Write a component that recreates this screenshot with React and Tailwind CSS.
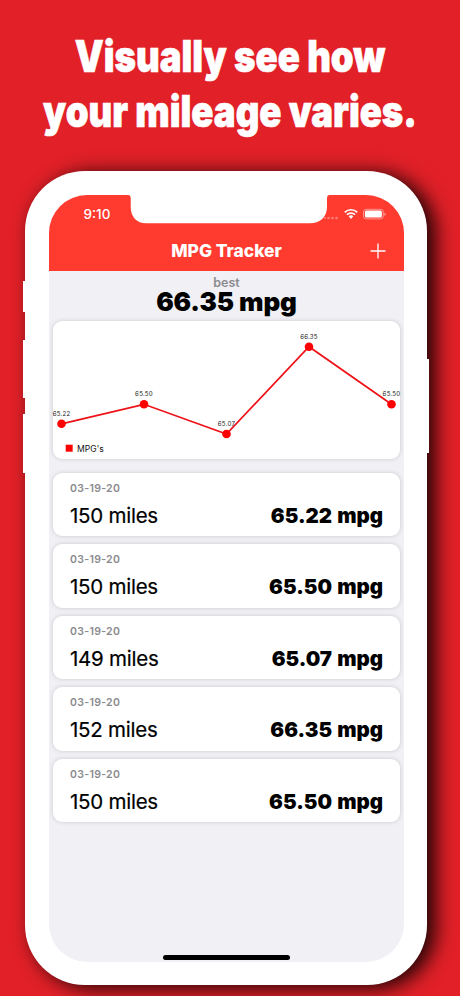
import React from "react";

const entries = [
  { date: "03-19-20", miles: "150 miles", mpg: "65.22 mpg" },
  { date: "03-19-20", miles: "150 miles", mpg: "65.50 mpg" },
  { date: "03-19-20", miles: "149 miles", mpg: "65.07 mpg" },
  { date: "03-19-20", miles: "152 miles", mpg: "66.35 mpg" },
  { date: "03-19-20", miles: "150 miles", mpg: "65.50 mpg" },
];

const points = [
  { x: 8.5, y: 102.8, label: "65.22" },
  { x: 91, y: 83.3, label: "65.50" },
  { x: 173.5, y: 113, label: "65.07" },
  { x: 256, y: 25.7, label: "66.35" },
  { x: 338.5, y: 83.3, label: "65.50" },
];

function Headline() {
  return (
    <h1 className="h-[171px] pt-[29px] text-center text-[44px] leading-[55px] font-black text-white whitespace-nowrap [-webkit-text-stroke:0.7px_white]">
      <span className="block origin-center scale-x-[0.83]">Visually see how</span>
      <span className="block origin-center scale-x-[0.83]">your mileage varies.</span>
    </h1>
  );
}

function StatusBar() {
  return (
    <div className="flex h-[38px] items-start text-white">
      <span className="w-[76px] pt-[10px] pl-[34.5px] text-[13.5px] leading-[18px] font-medium">9:10</span>
      <svg className="shrink-0" width="204" height="29" viewBox="0 0 204 29" fill="#fff">
        <path d="M3 0H204Q202 0.300 202 3V12C202 22 195 28.300 185 28.300H21C12 28.300 5.700 22 5.700 12V3Q5.700 0 3 0Z" />
      </svg>
      <svg className="-ml-[6px] mt-[12px] shrink-0" width="66" height="16" viewBox="0 0 66 16" fill="#fff">
        <g opacity="0.35">
          <circle cx="5.500" cy="11" r="1.300" />
          <circle cx="9.500" cy="11" r="1.300" />
          <circle cx="13.500" cy="11" r="1.300" />
          <circle cx="2" cy="11" r="1.100" />
        </g>
        <path d="M28 8.200Q29.500 8.200 30.300 9.200L28 11.900L25.700 9.200Q26.500 8.200 28 8.200Z" />
        <g fill="none" stroke="#fff" strokeWidth="1.700">
          <path d="M21.700 5.300C25.200 1.900 30.800 1.900 34.300 5.300" />
          <path d="M23.900 7.600C26.200 5.500 29.800 5.500 32.100 7.600" />
        </g>
        <rect x="40.500" y="2.300" width="19.800" height="9.600" rx="2.600" fill="none" stroke="#fff" strokeOpacity="0.5" strokeWidth="0.900" />
        <rect x="41.900" y="3.600" width="17" height="7" rx="1.500" />
        <path d="M61.400 5.400Q62.900 6 62.900 7.100T61.400 8.900Z" opacity="0.5" />
      </svg>
    </div>
  );
}

function NavBar() {
  return (
    <div className="grid h-[37.5px] grid-cols-[1fr_auto_1fr] items-center pb-px">
      <span className="col-start-2 text-[17.4px] font-extrabold text-white">MPG Tracker</span>
      <svg className="mr-[18px] justify-self-end" width="16" height="16" viewBox="0 0 16 16" stroke="#fff" strokeWidth="1.300">
        <path d="M8 0.500V15.500M0.500 8H15.500" />
      </svg>
    </div>
  );
}

function Chart() {
  return (
    <div className="h-[137.5px] rounded-[9px] bg-white shadow-[0_0_4px_rgba(0,0,0,0.17)]">
      <svg width="347" height="137" viewBox="0 0 347 137" className="overflow-visible">
        <polyline
          points={points.map((p) => `${p.x},${p.y}`).join(" ")}
          fill="none"
          stroke="#ee1218"
          strokeWidth="1.700"
        />
        {points.map((p) => (
          <g key={p.x}>
            <circle cx={p.x} cy={p.y} r="4.300" fill="#ff0000" />
            <text x={p.x} y={p.y - 8} textAnchor="middle" fontSize="6.200" letterSpacing="0.200" fill="#222">{p.label}</text>
          </g>
        ))}
        <rect x="12.700" y="123.700" width="7" height="7" fill="#ff0000" />
        <text x="24" y="130.600" fontSize="8.600" fill="#111">MPG's</text>
      </svg>
    </div>
  );
}

function Entry({ entry }) {
  return (
    <li className="h-[63.4px] rounded-[9px] bg-white px-[17px] pt-[9px] shadow-[0_0_4px_rgba(0,0,0,0.17)]">
      <p className="text-[10.5px] leading-[13px] font-semibold tracking-[0.3px] text-[#8b8b8f]">{entry.date}</p>
      <div className="mt-[8px] flex items-baseline justify-between text-[20.5px] leading-[26px] text-black">
        <span className="tracking-[-0.25px] [-webkit-text-stroke:0.2px_black]">{entry.miles}</span>
        <span className="font-black [word-spacing:1px]">{entry.mpg}</span>
      </div>
    </li>
  );
}

export default function App() {
  return (
    <main className="h-[996px] w-[460px] overflow-hidden bg-[#e22028] font-['Inter',sans-serif]">
      <Headline />
      <div className="relative ml-[25px] h-[814px] w-[402px] rounded-[60px] bg-white p-[24px] shadow-[8px_3px_19px_1px_rgba(0,0,0,0.85)]">
        <i className="absolute -left-[2px] top-[110px] h-[31px] w-[3px] bg-white" />
        <i className="absolute -left-[2px] top-[169px] h-[58px] w-[3px] bg-white" />
        <i className="absolute -left-[2px] top-[243px] h-[59px] w-[3px] bg-white" />
        <i className="absolute -right-[2px] top-[188px] h-[94px] w-[3px] bg-white" />
        <div className="flex h-[767px] w-[355px] flex-col overflow-hidden rounded-[38px] bg-[#f0f0f5]">
          <header className="bg-[#ff3b30]">
            <StatusBar />
            <NavBar />
          </header>
          <section className="flex h-[50.5px] flex-col items-center pt-[4px]">
            <span className="text-[12.5px] leading-[16px] font-semibold text-[#8b8b8f]">best</span>
            <strong className="text-[26px] leading-[21px] font-black tracking-[-0.1px] text-black">66.35 mpg</strong>
          </section>
          <div className="px-[4px]">
            <Chart />
            <ul className="mt-[14.5px] flex flex-col gap-[8px]">
              {entries.map((entry, i) => (
                <Entry key={i} entry={entry} />
              ))}
            </ul>
          </div>
          <div className="mt-auto mb-[2.5px] h-[4.5px] w-[127px] self-center rounded-full bg-black" />
        </div>
      </div>
    </main>
  );
}
